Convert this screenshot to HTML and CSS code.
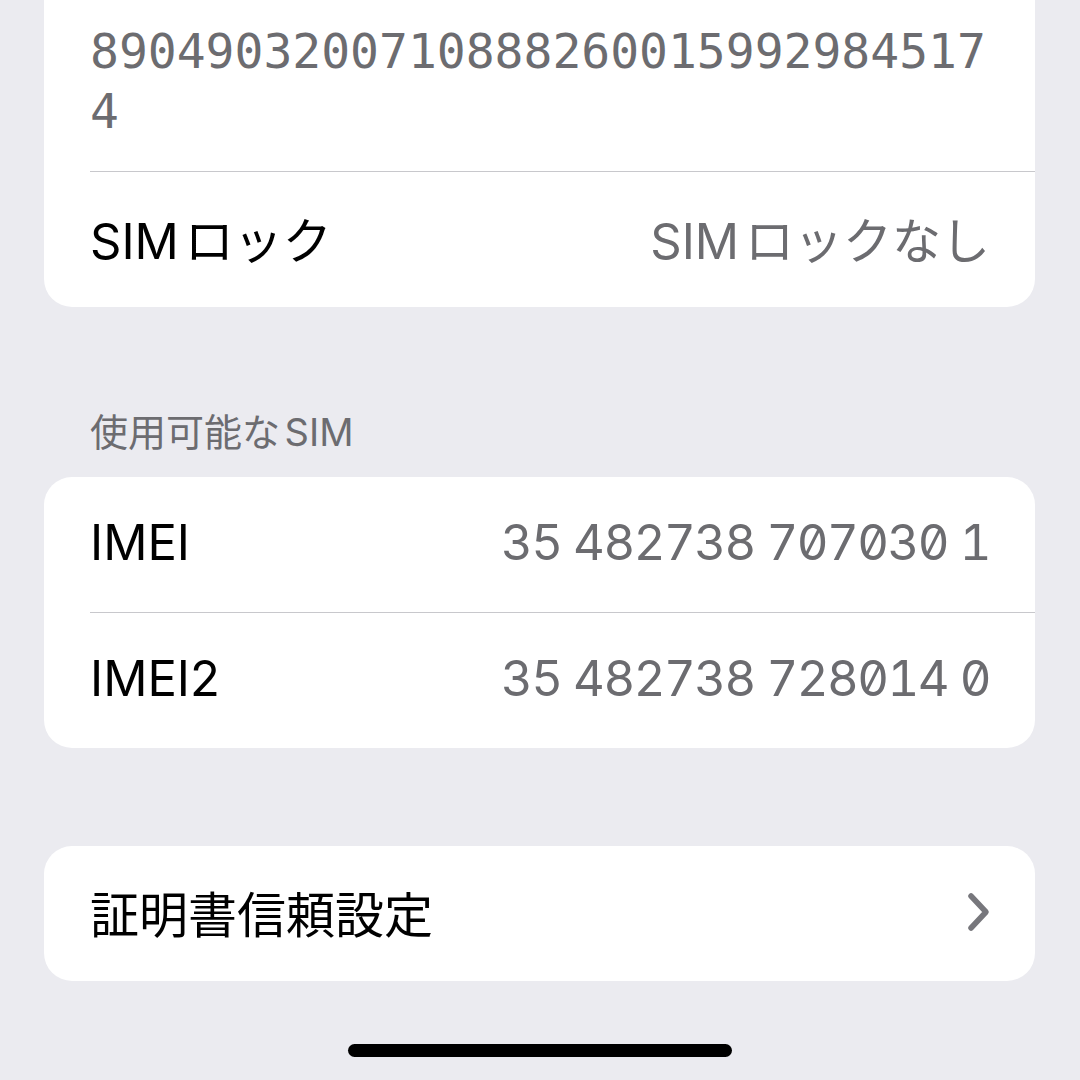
FILE: index.html
```html
<!DOCTYPE html>
<html lang="ja">
<head>
    <meta charset="UTF-8">
    <meta name="viewport" content="width=device-width, initial-scale=1.0">
    <title>情報</title>
    <link rel="stylesheet" href="styles.css">
</head>
<body>

    <div class="screen">
        <section class="group group-top">
            <div class="row row-eid">
                <span class="eid">89049032007108882600159929845174</span>
            </div>
            <div class="row">
                <span class="label"><span class="latin">SIM</span>ロック</span>
                <span class="value"><span class="latin">SIM</span>ロックなし</span>
            </div>
        </section>

        <h2 class="group-title">使用可能な<span class="latin-before">SIM</span></h2>
        <section class="group">
            <div class="row">
                <span class="label">IMEI</span>
                <span class="value num">35 482738 707030 1</span>
            </div>
            <div class="row">
                <span class="label">IMEI2</span>
                <span class="value num">35 482738 728014 0</span>
            </div>
        </section>

        <section class="group group-link">
            <div class="row">
                <span class="label">証明書信頼設定</span>
                <svg class="chevron" viewBox="0 0 26 42" width="26" height="42">
                    <polyline points="5,5 20,21 5,37" fill="none" stroke="currentColor" stroke-width="5.5" stroke-linecap="round" stroke-linejoin="round"/>
                </svg>
            </div>
        </section>

        <div class="home-bar"></div>
    </div>

</body>
</html>
```

FILE: styles.css
```css
body {
    margin: 0;
    background-color: #ebebf0;
    font-family: Inter, "Noto Sans CJK JP", sans-serif;
    color: #000;
}

.screen {
    width: 1080px;
    height: 1080px;
    overflow: hidden;
    display: flex;
    flex-direction: column;
    padding: 0 45px 0 44px;
    box-sizing: border-box;
}

/* white rounded list block */
.group {
    background-color: #fff;
    border-radius: 28px;
}

.group-top {
    border-radius: 0 0 28px 28px; /* top edge is scrolled off */
}

.row {
    display: flex;
    align-items: center;
    justify-content: space-between;
    height: 135px;
    margin-left: 46px;
    padding-right: 45px;
    padding-bottom: 4px;
    font-size: 49px;
    box-sizing: border-box;
}

.row + .row {
    height: 136px;
    border-top: 1px solid #c8c8cc;
}

.row-eid {
    display: block;
    height: auto;
    padding-top: 21px;
    padding-bottom: 30px;
}

.eid {
    display: block;
    font-family: "DejaVu Sans Mono", monospace;
    font-size: 48px;
    line-height: 60px;
    color: #6c6c70;
    word-break: break-all;
}

.value {
    color: #6c6c70;
}

.num {
    font-feature-settings: "tnum", "zero";
    letter-spacing: -1.5px;
}

/* small gap between latin and kana, like iOS does */
.latin {
    margin-right: 0.12em;
}

.latin-before {
    margin-left: 0.12em;
}

.group-title {
    margin: 102px 0 22px 46px;
    font-size: 38px;
    line-height: 46px;
    font-weight: 400;
    color: #6c6c70;
}

.group-link {
    margin-top: 98px;
}

.chevron {
    color: #77777c;
    margin-right: -2px;
}

.home-bar {
    width: 384px;
    height: 13px;
    border-radius: 7px;
    background-color: #000;
    margin: 63px auto 0;
}
```
